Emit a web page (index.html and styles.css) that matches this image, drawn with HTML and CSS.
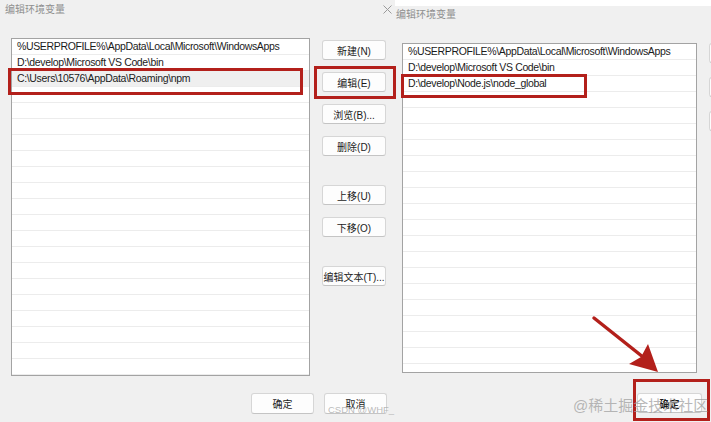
FILE: index.html
```html
<!DOCTYPE html>
<html lang="zh-CN">
<head>
  <meta charset="UTF-8">
  <meta name="viewport" content="width=device-width, initial-scale=1.0">
  <title>编辑环境变量</title>
  <link rel="stylesheet" href="styles.css">
</head>
<body>
  <div class="screen">
    <section class="dialog dialog-left">
      <div class="title">编辑环境变量</div>
      <div class="body">
        <ul class="list list-left">
          <li>%USERPROFILE%\AppData\Local\Microsoft\WindowsApps</li>
          <li>D:\develop\Microsoft VS Code\bin</li>
          <li class="selected">C:\Users\10576\AppData\Roaming\npm<span class="mark mark-row-left"></span></li>
        </ul>
        <div class="actions">
          <button class="btn">新建(N)</button>
          <button class="btn">编辑(E)<span class="mark mark-btn"></span></button>
          <button class="btn">浏览(B)...</button>
          <button class="btn">删除(D)</button>
          <button class="btn gap">上移(U)</button>
          <button class="btn">下移(O)</button>
          <button class="btn gap">编辑文本(T)...</button>
        </div>
      </div>
      <div class="footer">
        <button class="btn">确定</button>
        <button class="btn">取消<span class="wm-csdn">CSDN @WHF_</span></button>
      </div>
    </section>

    <section class="dialog dialog-right">
      <div class="header">
        <svg class="close" width="9" height="9" viewBox="0 0 9 9">
          <path d="M0.5 0.5 L8.5 8.5 M8.5 0.5 L0.5 8.5" stroke="#9a9a9a" stroke-width="1" fill="none"/>
        </svg>
        <span class="title">编辑环境变量</span>
      </div>
      <div class="body">
        <ul class="list list-right">
          <li>%USERPROFILE%\AppData\Local\Microsoft\WindowsApps</li>
          <li>D:\develop\Microsoft VS Code\bin</li>
          <li>D:\develop\Node.js\node_global<span class="mark mark-row-right"></span></li>
        </ul>
        <div class="actions edge">
          <button class="btn"></button>
          <button class="btn"></button>
          <button class="btn"></button>
        </div>
      </div>
      <div class="footer">
        <button class="btn btn-ok">确定<span class="mark mark-ok"></span></button>
      </div>
    </section>

    <svg class="arrow" width="711" height="422" viewBox="0 0 711 422">
      <line x1="594" y1="318" x2="648" y2="361" stroke="#b3201b" stroke-width="3.5" stroke-linecap="round"/>
      <polygon points="658,372 629,364 641,357 648,344" fill="#b3201b"/>
    </svg>
    <span class="wm-juejin">@稀土掘金技术社区</span>
  </div>
</body>
</html>
```

FILE: styles.css
```css
:root {
  --fundo: #f0f0f0;
  --borda: #a3a3a3;
  --linha: #ececec;
  --vermelho: #b3201b;
  --texto: #1b1b1b;
}

body {
  margin: 0;
  font-family: 'Liberation Sans', 'Noto Sans CJK SC', sans-serif;
  font-size: 10px;
  color: var(--texto);
  background: var(--fundo);
}

.screen {
  position: relative;
  display: flex;
  width: 711px;
  height: 422px;
  overflow: hidden;
  background: var(--fundo);
}

.dialog {
  display: flex;
  flex-direction: column;
  flex-shrink: 0;
}

.dialog-left {
  width: 395px;
}

.dialog-right {
  width: 316px;
}

.title {
  color: #8f8f8f;
  font-size: 10px;
  line-height: 14px;
}

.dialog-left > .title {
  height: 38px;
  box-sizing: border-box;
  padding: 3px 0 0 5px;
}

.body {
  display: flex;
  gap: 12px;
}

.dialog-left .body {
  padding-left: 11px;
}

.list {
  position: relative;
  flex-shrink: 0;
  margin: 0;
  padding: 0;
  list-style: none;
  box-sizing: border-box;
  border: 1px solid var(--borda);
  background-color: #fff;
  background-image: repeating-linear-gradient(to bottom, transparent 0 15px, var(--linha) 15px 16px);
}

.list li {
  position: relative;
  height: 16px;
  box-sizing: border-box;
  padding-left: 5px;
  line-height: 15px;
  font-size: 10.5px;
  letter-spacing: -0.35px;
  border-bottom: 1px solid var(--linha);
  white-space: nowrap;
}

.list li.selected {
  background: #efefef;
}

.list-left {
  width: 299px;
  height: 338px;
}

.list-right {
  width: 295px;
  height: 330px;
  margin-left: 7px;
}

.actions {
  display: flex;
  flex-direction: column;
  flex-shrink: 0;
  gap: 12px;
  padding-top: 2px;
}

.btn {
  position: relative;
  width: 64px;
  height: 20px;
  padding: 0;
  font-family: inherit;
  font-size: 10px;
  color: var(--texto);
  background: #fdfdfd;
  border: 1px solid #d6d6d6;
  border-bottom-color: #c4c4c4;
  border-radius: 3px;
  white-space: nowrap;
}

.btn.gap {
  margin-top: 17px;
}

.edge {
  gap: 14px;
  padding-top: 0;
}

.footer {
  display: flex;
  justify-content: flex-end;
  gap: 10px;
}

.dialog-left .footer {
  margin-top: 17px;
  padding-right: 8px;
}

.dialog-left .footer .btn {
  width: 63px;
  height: 21px;
}

.dialog-right .footer {
  margin-top: 20px;
  padding-right: 9px;
}

.dialog-right .footer .btn-ok {
  width: 65px;
  font-weight: bold;
}

.header {
  display: flex;
  align-items: flex-start;
  height: 43px;
  background: linear-gradient(to bottom, #fff 0 6px, var(--fundo) 6px);
}

.close {
  margin: 5px 0 0 -12px;
}

.header .title {
  margin: 8px 0 0 4px;
}

/* marcações em vermelho */
.mark {
  position: absolute;
  border: 3px solid var(--vermelho);
  box-sizing: border-box;
  pointer-events: none;
}

.mark-row-left {
  left: -4px;
  top: -3px;
  width: 295px;
  height: 27px;
}

.mark-row-right {
  left: -2px;
  top: -2px;
  width: 186px;
  height: 24px;
}

.mark-btn {
  left: -9px;
  top: -7px;
  width: 82px;
  height: 33px;
}

.mark-ok {
  left: -5px;
  top: -15px;
  width: 77px;
  height: 42px;
}

.arrow {
  position: absolute;
  left: 0;
  top: 0;
  pointer-events: none;
}

.wm-csdn {
  position: absolute;
  left: 3px;
  top: 10px;
  font-size: 9.5px;
  font-weight: normal;
  color: rgba(170, 170, 170, 0.8);
}

.wm-juejin {
  position: absolute;
  left: 573px;
  top: 396px;
  font-size: 15px;
  line-height: 20px;
  white-space: nowrap;
  color: rgba(160, 160, 160, 0.75);
}
```
